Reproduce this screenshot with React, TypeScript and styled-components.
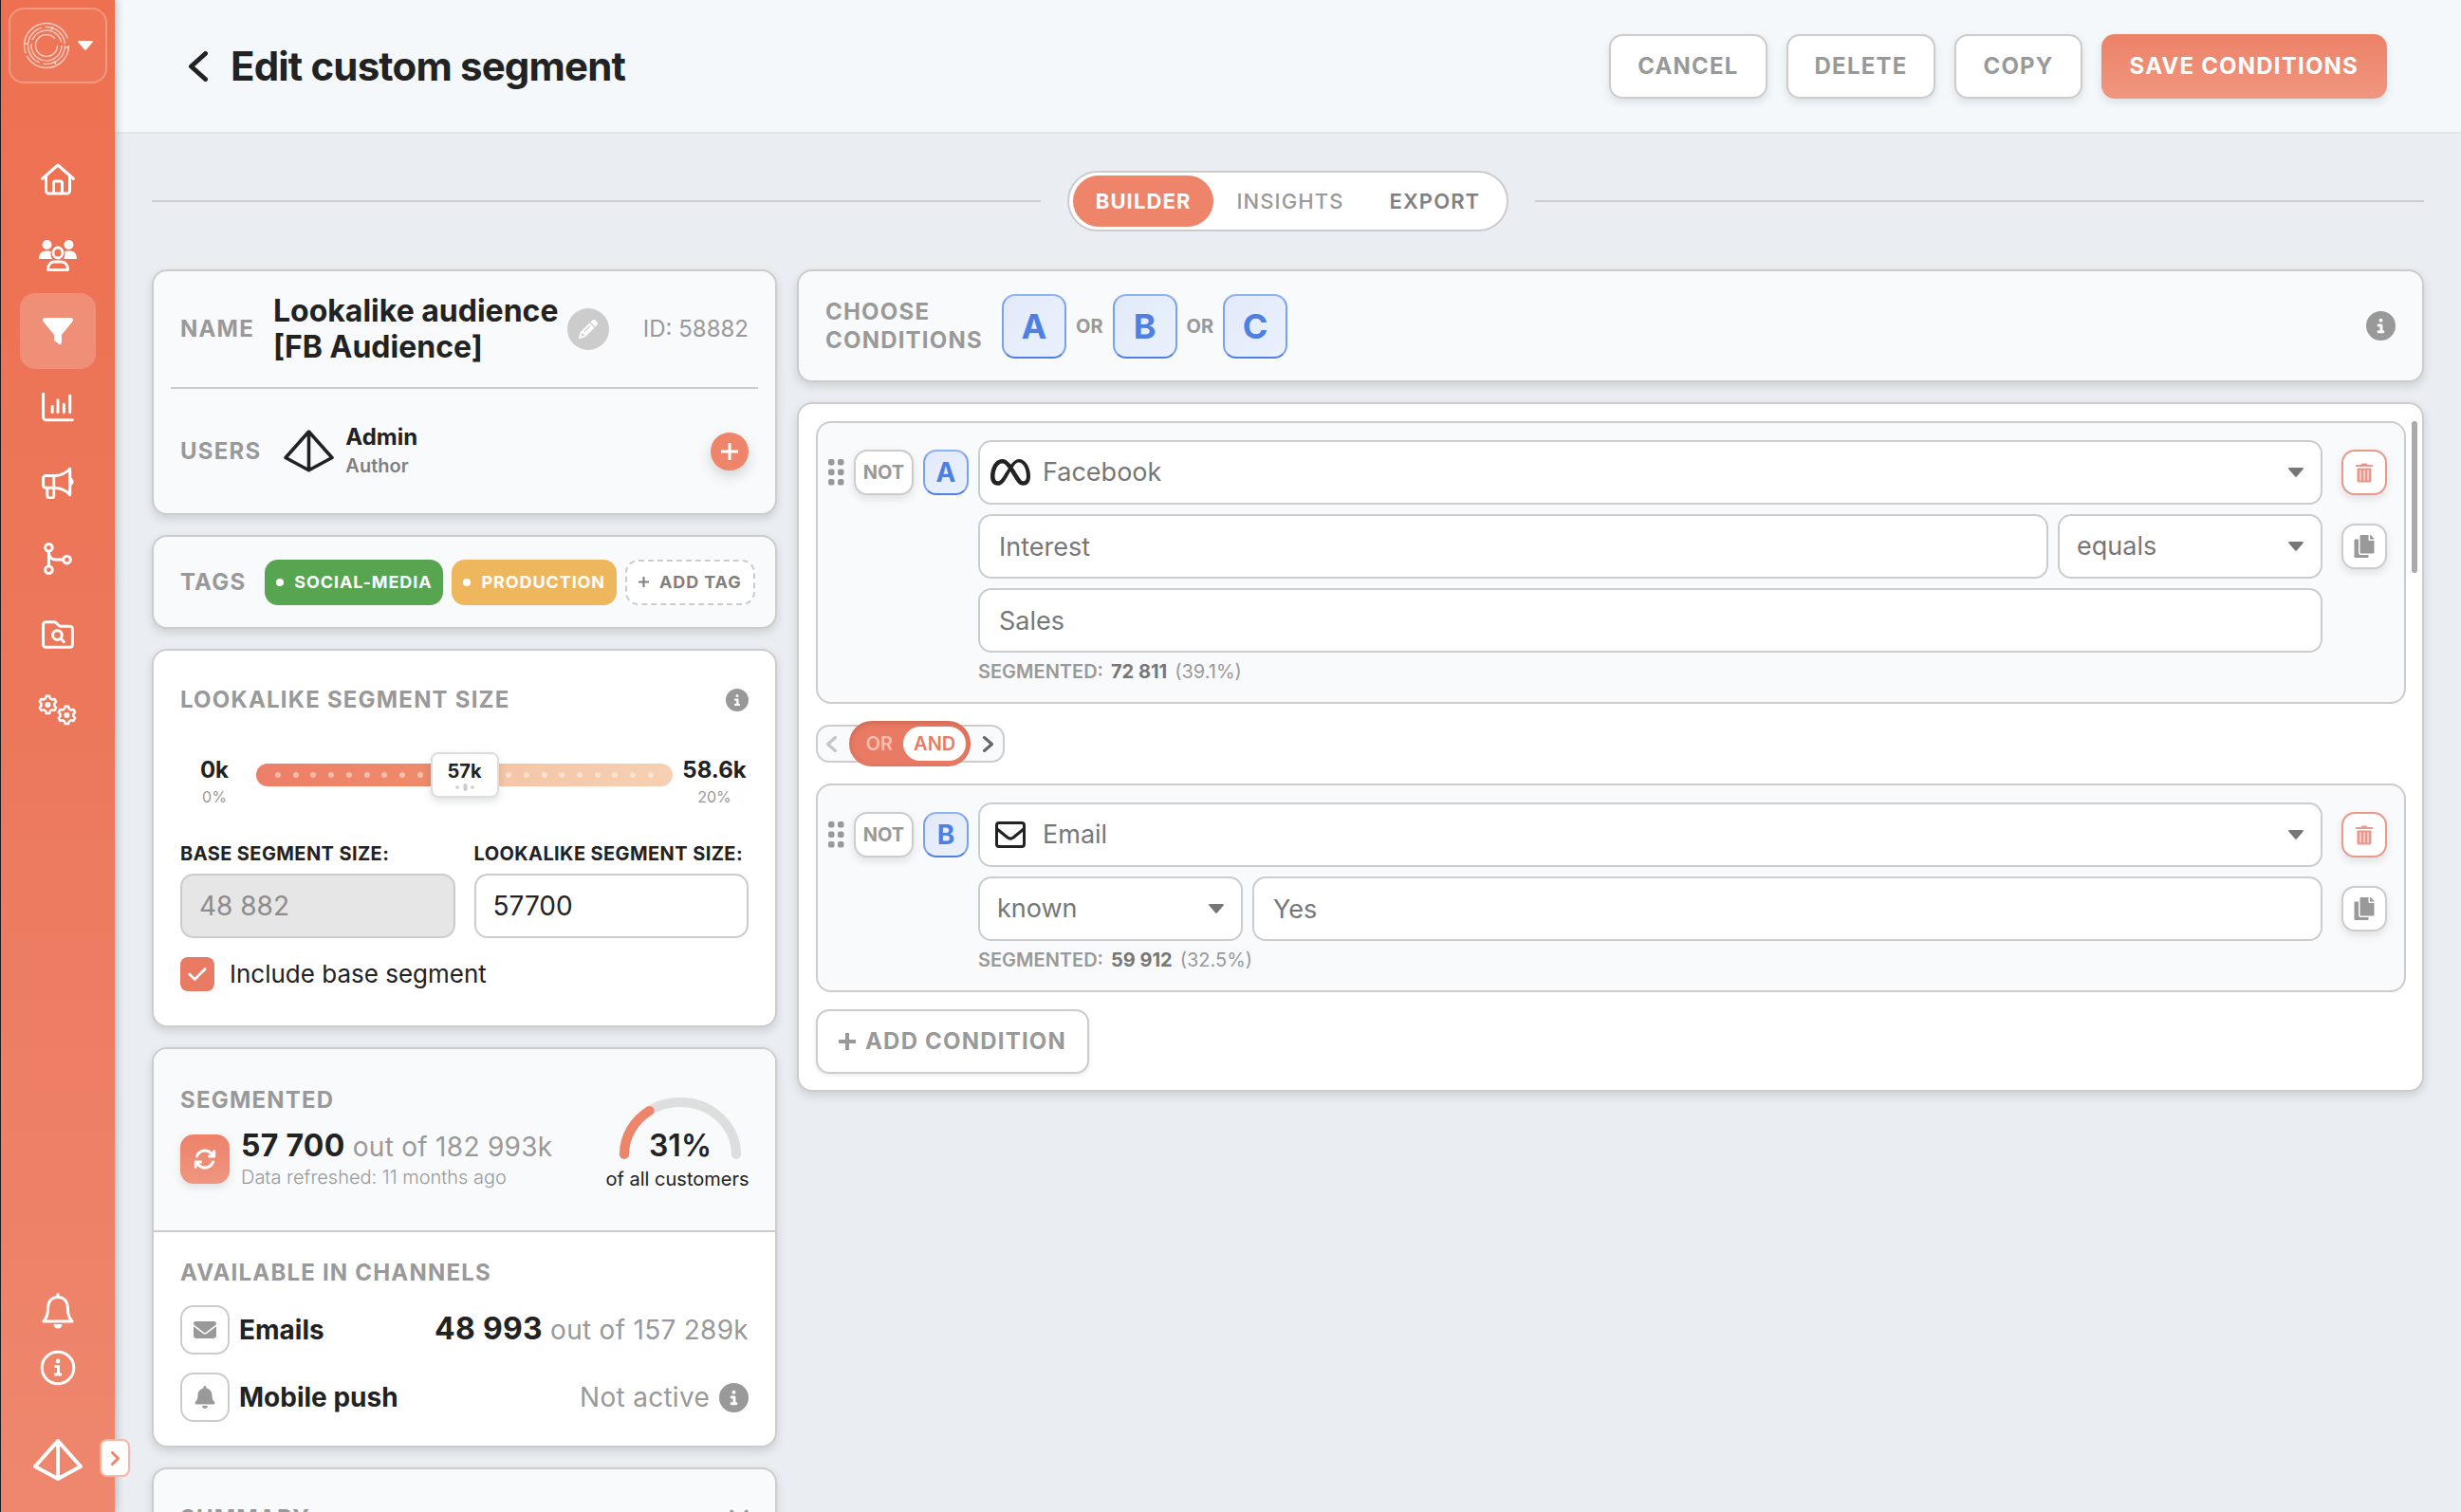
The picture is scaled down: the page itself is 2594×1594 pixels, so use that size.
import React, { useState } from "react";
import styled, { createGlobalStyle, css } from "styled-components";
import {
  FaArrowsRotate,
  FaBell,
  FaCheck,
  FaCircleInfo,
  FaEnvelope,
  FaFilter,
  FaMeta,
  FaPencil,
} from "react-icons/fa6";
import { FaCopy } from "react-icons/fa";

const color = {
  page: "#eaedf2",
  panel: "#f9fafb",
  white: "#ffffff",
  ink: "#222222",
  body: "#777777",
  label: "#999999",
  line: "#cccccc",
  accent: "#ee846a",
  blue: "#4f80e1",
};

const GlobalStyle = createGlobalStyle`
  *, *::before, *::after { box-sizing: border-box; }
  body {
    margin: 0;
    background: ${color.page};
    color: ${color.ink};
    font-family: Inter, "Liberation Sans", sans-serif;
    font-size: 24px;
    line-height: 30px;
  }
  button, input, select { font: inherit; color: inherit; margin: 0; }
  button { cursor: pointer; padding: 0; }
  h1, h2, p { margin: 0; }
  svg { display: block; flex: none; }
`;

/* ---------- shell ---------- */

const Shell = styled.div`
  display: flex;
  height: 100vh;
  overflow: hidden;
`;

const Sidebar = styled.nav`
  position: relative;
  z-index: 2;
  flex: none;
  display: flex;
  flex-direction: column;
  align-items: center;
  width: 121px;
  padding: 8px 0 33px;
  border-left: 1px solid #1d1d1f;
  color: ${color.white};
  background: linear-gradient(180deg, #ee7050 0%, #ec775b 45%, #ee876e 100%);
  box-shadow: 2px 0 8px rgba(60, 70, 80, 0.3);
`;

const Workspace = styled.button`
  display: flex;
  align-items: center;
  justify-content: center;
  gap: 8px;
  width: 104px;
  height: 80px;
  border: 2px solid rgba(255, 255, 255, 0.25);
  border-radius: 16px;
  background: rgba(255, 255, 255, 0.04);
  color: inherit;
`;

const NavList = styled.div<{ $top?: number }>`
  display: flex;
  flex-direction: column;
  align-items: center;
  margin-top: ${(p) => (p.$top ? `${p.$top}px` : "auto")};
`;

const NavLink = styled.a<{ $active?: boolean; $short?: boolean }>`
  display: grid;
  place-items: center;
  width: 80px;
  height: ${(p) => (p.$short ? 60 : 80)}px;
  border-radius: 16px;
  color: inherit;
  background: ${(p) => (p.$active ? "rgba(255, 255, 255, 0.2)" : "transparent")};
`;

const BrandMark = styled.div`
  margin-top: 45px;
`;

const Expand = styled.button`
  position: absolute;
  right: -16px;
  bottom: 37px;
  display: grid;
  place-items: center;
  width: 32px;
  height: 40px;
  border: 2px solid #f9b5a4;
  border-radius: 8px;
  background: ${color.white};
  color: ${color.accent};
`;

const Main = styled.main`
  flex: 1;
  min-width: 0;
  display: flex;
  flex-direction: column;
`;

const Header = styled.header`
  flex: none;
  display: flex;
  align-items: center;
  justify-content: space-between;
  height: 141px;
  padding: 0 78px;
  border-bottom: 2px solid #e3e6e8;
  background: #f4f8fb;
`;

const Heading = styled.div`
  display: flex;
  align-items: center;
  gap: 24px;
`;

const BackLink = styled.a`
  color: ${color.ink};
`;

const Title = styled.h1`
  font-size: 42px;
  line-height: 52px;
  font-weight: 700;
  letter-spacing: -0.02em;
`;

const Actions = styled.div`
  display: flex;
  gap: 20px;
`;

const raised = css`
  box-shadow: 0 4px 8px rgba(50, 60, 70, 0.13);
`;

const Button = styled.button<{ $primary?: boolean }>`
  height: 68px;
  padding: 0 28px;
  border: 2px solid ${(p) => (p.$primary ? "transparent" : color.line)};
  border-radius: 14px;
  font-size: 24px;
  font-weight: 700;
  letter-spacing: 0.05em;
  color: ${(p) => (p.$primary ? color.white : color.label)};
  background: ${(p) => (p.$primary ? "linear-gradient(180deg, #ec8268, #f09680) border-box" : color.white)};
  ${raised}
`;

const Content = styled.div`
  flex: 1;
  min-height: 0;
  overflow-y: auto;
  scrollbar-width: none;
  padding: 39px;
`;

/* ---------- tabs ---------- */

const TabRow = styled.div`
  display: flex;
  align-items: center;
  gap: 28px;
  margin-bottom: 40px;
  &::before,
  &::after {
    content: "";
    flex: 1;
    height: 2px;
    background: ${color.line};
  }
`;

const Tabs = styled.div`
  display: flex;
  padding: 3px 4px;
  border: 2px solid ${color.line};
  border-radius: 32px;
  background: ${color.white};
`;

const Tab = styled.button<{ $tone: "on" | "soft" | "normal" }>`
  height: 54px;
  padding: 0 24px;
  border: 0;
  border-radius: 27px;
  font-size: 22px;
  letter-spacing: 0.05em;
  font-weight: ${(p) => (p.$tone === "on" ? 700 : p.$tone === "normal" ? 600 : 500)};
  color: ${(p) => (p.$tone === "on" ? color.white : p.$tone === "normal" ? "#808080" : color.label)};
  background: ${(p) => (p.$tone === "on" ? color.accent : "transparent")};
`;

/* ---------- cards ---------- */

const Columns = styled.div`
  display: grid;
  grid-template-columns: 659px minmax(0, 1fr);
  align-items: start;
  gap: 21px;
`;

const Stack = styled.div`
  display: flex;
  flex-direction: column;
  gap: 21px;
`;

const Card = styled.section<{ $white?: boolean }>`
  border: 2px solid ${color.line};
  border-radius: 16px;
  background: ${(p) => (p.$white ? color.white : color.panel)};
  box-shadow: 0 4px 10px rgba(50, 60, 70, 0.16);
`;

const Label = styled.h2`
  font-size: 24px;
  line-height: 30px;
  font-weight: 700;
  letter-spacing: 0.05em;
  color: ${color.label};
`;

const InfoRow = styled.div<{ $height: number }>`
  display: flex;
  align-items: center;
  gap: 20px;
  min-height: ${(p) => p.$height}px;
  padding: 0 28px;
`;

const Divider = styled.hr`
  height: 2px;
  margin: 0 18px;
  border: 0;
  background: ${color.line};
`;

const SegmentName = styled.p`
  flex: 0 1 302px;
  font-size: 32px;
  line-height: 38px;
  font-weight: 700;
`;

const Round = styled.button<{ $accent?: boolean }>`
  flex: none;
  display: grid;
  place-items: center;
  width: ${(p) => (p.$accent ? 40 : 44)}px;
  height: ${(p) => (p.$accent ? 40 : 44)}px;
  margin-left: ${(p) => (p.$accent ? "auto" : "-12px")};
  border: 0;
  border-radius: 50%;
  color: ${color.white};
  background: ${(p) => (p.$accent ? color.accent : color.line)};
  box-shadow: ${(p) => (p.$accent ? "0 6px 14px rgba(50, 60, 70, 0.2)" : "none")};
`;

const Identifier = styled.span`
  margin-left: auto;
  font-weight: 400;
  color: ${color.label};
`;

const User = styled.div`
  display: flex;
  align-items: center;
  gap: 12px;
  margin-left: 4px;
`;

const UserName = styled.p`
  font-weight: 700;
`;

const UserRole = styled.p`
  font-size: 20px;
  font-weight: 600;
  color: #808080;
`;

const TagList = styled.div`
  display: flex;
  gap: 9px;
`;

const Tag = styled.button<{ $bg?: string }>`
  display: flex;
  align-items: center;
  gap: 11px;
  height: 48px;
  padding: 0 12px;
  border: ${(p) => (p.$bg ? "0" : `2px dashed ${color.line}`)};
  border-radius: 14px;
  font-size: 18px;
  font-weight: 700;
  letter-spacing: 0.05em;
  white-space: nowrap;
  color: ${(p) => (p.$bg ? color.white : "#808080")};
  background: ${(p) => p.$bg ?? color.white};
`;

const TagDot = styled.span`
  width: 8px;
  height: 8px;
  border-radius: 50%;
  background: currentColor;
`;

/* ---------- lookalike size ---------- */

const Section = styled.div<{ $top: number; $bottom: number }>`
  padding: ${(p) => p.$top}px 28px ${(p) => p.$bottom}px;
`;

const Spread = styled.div`
  display: flex;
  align-items: center;
  justify-content: space-between;
  color: ${color.label};
`;

const RangeRow = styled.div`
  display: grid;
  grid-template-columns: 72px 1fr 72px;
  gap: 8px;
  margin-top: 40px;
`;

const RangeEnd = styled.div`
  padding-top: 4px;
  text-align: center;
`;

const RangeValue = styled.p`
  font-weight: 700;
`;

const RangePercent = styled.p`
  font-size: 16px;
  line-height: 26px;
  color: ${color.label};
`;

const Slider = styled.div`
  position: relative;
  display: grid;
  align-items: center;
  height: 48px;
`;

const Track = styled.div`
  grid-area: 1 / 1;
  display: flex;
  align-items: center;
  justify-content: space-between;
  height: 24px;
  padding: 0 20px;
  border-radius: 12px;
`;

const TrackDot = styled.span`
  width: 6px;
  height: 6px;
  border-radius: 50%;
  background: rgba(255, 255, 255, 0.45);
`;

const RangeInput = styled.input`
  grid-area: 1 / 1;
  appearance: none;
  width: 100%;
  height: 48px;
  background: transparent;
  &::-webkit-slider-thumb {
    appearance: none;
    width: 72px;
    height: 48px;
    border: 2px solid #dddddd;
    border-radius: 8px;
    background: ${color.white};
    box-shadow: 0 4px 8px rgba(50, 60, 70, 0.15);
  }
`;

const RangeOutput = styled.output`
  position: absolute;
  top: 7px;
  display: grid;
  justify-items: center;
  width: 72px;
  font-size: 20px;
  line-height: 26px;
  font-weight: 700;
  pointer-events: none;
`;

const Fields = styled.div`
  display: grid;
  grid-template-columns: 1fr 1fr;
  gap: 20px;
  margin-top: 35px;
`;

const Field = styled.label`
  display: grid;
  gap: 9px;
  font-size: 20px;
  line-height: 24px;
  font-weight: 700;
  letter-spacing: 0.02em;
  white-space: nowrap;
`;

const fieldBox = css`
  width: 100%;
  min-width: 0;
  height: 68px;
  border: 2px solid ${color.line};
  border-radius: 14px;
  font-weight: 400;
  letter-spacing: 0;
`;

const NumberInput = styled.input`
  ${fieldBox}
  padding: 0 18px;
  font-size: 28px;
  background: ${color.white};
  &:disabled {
    color: #8c8c8c;
    background: #e6e6e6;
  }
`;

const CheckLine = styled.label`
  display: flex;
  align-items: center;
  gap: 16px;
  margin-top: 20px;
  font-size: 26px;
`;

const CheckBox = styled.span`
  display: grid;
  place-items: center;
  color: ${color.white};
  & > * {
    grid-area: 1 / 1;
  }
  svg {
    pointer-events: none;
    z-index: 1;
  }
`;

const CheckInput = styled.input`
  appearance: none;
  width: 36px;
  height: 36px;
  border-radius: 8px;
  background: #d0d0d0;
  &:checked {
    background: #e97b64;
  }
`;

/* ---------- counts ---------- */

const Overview = styled.div`
  display: grid;
  grid-template-columns: 1fr 150px;
  padding: 39px 28px 42px;
  border-bottom: 2px solid ${color.line};
  border-radius: 14px 14px 0 0;
  background: ${color.panel};
`;

const Totals = styled.div`
  display: flex;
  align-items: center;
  gap: 12px;
  margin-top: 15px;
`;

const Refresh = styled.button`
  display: grid;
  place-items: center;
  width: 52px;
  height: 52px;
  border: 0;
  border-radius: 14px;
  color: ${color.white};
  background: linear-gradient(180deg, #ec8268, #f09680);
  ${raised}
`;

const Count = styled.p`
  font-size: 28px;
  line-height: 38px;
  font-weight: 400;
  letter-spacing: 0.01em;
  color: ${color.label};
  white-space: nowrap;
`;

const Big = styled.strong`
  font-size: 32px;
  line-height: 32px;
  font-weight: 700;
  color: ${color.ink};
`;

const Note = styled.p`
  font-size: 20px;
  line-height: 26px;
  font-weight: 300;
  color: ${color.label};
`;

const GaugeColumn = styled.div`
  display: flex;
  flex-direction: column;
  align-items: center;
  gap: 8px;
  padding-top: 12px;
  font-size: 20px;
  line-height: 24px;
  white-space: nowrap;
`;

const Gauge = styled.div`
  display: grid;
  justify-items: center;
  align-items: end;
  padding-left: 6px;
  & > * {
    grid-area: 1 / 1;
  }
`;

const GaugeValue = styled.strong`
  font-size: 32px;
  line-height: 30px;
  font-weight: 600;
`;

const Channel = styled.div`
  display: flex;
  align-items: center;
  gap: 10px;
  margin-top: 19px;
  color: ${color.label};
`;

const ChannelIcon = styled.span`
  display: grid;
  place-items: center;
  width: 52px;
  height: 52px;
  border: 2px solid ${color.line};
  border-radius: 14px;
`;

const ChannelName = styled.p`
  margin-right: auto;
  font-size: 28px;
  line-height: 38px;
  font-weight: 700;
  color: ${color.ink};
`;

/* ---------- conditions ---------- */

const Choose = styled.div`
  display: flex;
  align-items: center;
  gap: 10px;
  min-height: 115px;
  padding: 0 28px;
  font-size: 20px;
  font-weight: 700;
  color: ${color.label};
  & > svg {
    margin-left: auto;
  }
`;

const ChooseLabel = styled(Label)`
  width: 176px;
`;

const Letter = styled.button<{ $large?: boolean }>`
  flex: none;
  width: ${(p) => (p.$large ? 68 : 48)}px;
  height: ${(p) => (p.$large ? 68 : 48)}px;
  border: 2px solid;
  border-color: #8fb2f0 #7aa2ec #4f80e1;
  border-radius: 14px;
  font-size: ${(p) => (p.$large ? 36 : 28)}px;
  font-weight: 700;
  color: ${color.blue};
  background: linear-gradient(135deg, #e2eafa, #eaf0fc);
`;

const Builder = styled(Card)`
  position: relative;
  display: flex;
  flex-direction: column;
  align-items: flex-start;
  gap: 18px;
  padding: 18px 17px 17px 18px;
`;

const ScrollThumb = styled.span`
  position: absolute;
  top: 18px;
  right: 5px;
  width: 6px;
  height: 160px;
  border-radius: 3px;
  background: #aaaaaa;
`;

const Condition = styled.div`
  display: flex;
  align-items: flex-start;
  gap: 10px;
  width: 100%;
  padding: 18px 18px 22px 11px;
  border: 2px solid ${color.line};
  border-radius: 16px;
  background: ${color.panel};
`;

const Lead = styled.div`
  display: flex;
  align-items: center;
  gap: 10px;
  height: 68px;
  color: ${color.label};
`;

const NotButton = styled.button`
  width: 63px;
  height: 48px;
  border: 2px solid ${color.line};
  border-radius: 14px;
  font-size: 20px;
  font-weight: 700;
  background: ${color.white};
  ${raised}
`;

const Rules = styled.div`
  flex: 1;
  min-width: 0;
  display: grid;
  gap: 10px;
`;

const Rule = styled.div<{ $columns?: string }>`
  display: grid;
  grid-template-columns: ${(p) => p.$columns ?? "1fr"};
  gap: 10px;
`;

const TextInput = styled.input`
  ${fieldBox}
  padding: 0 20px;
  font-size: 27px;
  color: ${color.body};
  background: ${color.white};
`;

const SelectWrap = styled.div`
  position: relative;
  display: grid;
  align-items: center;
  color: ${color.body};
`;

const SelectBox = styled.select<{ $icon?: boolean }>`
  ${fieldBox}
  appearance: none;
  padding: 0 50px 0 ${(p) => (p.$icon ? 66 : 18)}px;
  font-size: 27px;
  background: ${color.white};
`;

const SelectIcon = styled.span`
  position: absolute;
  left: 12px;
  display: grid;
  place-items: center;
  width: 44px;
  color: ${color.ink};
  pointer-events: none;
`;

const SelectCaret = styled.span`
  position: absolute;
  right: 20px;
  pointer-events: none;
`;

const Summary = styled.p`
  display: flex;
  gap: 8px;
  font-size: 20px;
  line-height: 20px;
  color: ${color.label};
`;

const SummaryName = styled.span`
  font-weight: 600;
`;

const SummaryValue = styled.strong`
  font-weight: 700;
  color: ${color.body};
`;

const Tools = styled.div`
  display: grid;
  gap: 30px;
  padding: 10px 0 0 10px;
`;

const Tool = styled.button<{ $danger?: boolean }>`
  display: grid;
  place-items: center;
  width: 48px;
  height: 48px;
  border: 2px solid ${(p) => (p.$danger ? "#e8988c" : color.line)};
  border-radius: 14px;
  color: ${(p) => (p.$danger ? "#e8988c" : color.label)};
  background: ${color.white};
  ${raised}
`;

const Joiner = styled.div`
  display: flex;
  align-items: center;
  justify-content: space-between;
  width: 199px;
  height: 40px;
  margin: 4px 0;
  padding: 0 10px 0 9px;
  border: 2px solid ${color.line};
  border-radius: 14px;
  background: ${color.panel};
`;

const Move = styled.button<{ $off?: boolean }>`
  border: 0;
  background: none;
  color: ${(p) => (p.$off ? "#c4c4c4" : "#666666")};
`;

const Switch = styled.div`
  display: flex;
  align-items: center;
  height: 48px;
  padding: 0 5px 0 7px;
  border-radius: 24px;
  background: #e97b64;
  box-shadow: inset 0 2px 6px rgba(120, 40, 20, 0.25);
`;

const SwitchOption = styled.button<{ $on?: boolean }>`
  height: 36px;
  padding: 0 11px;
  border: 0;
  border-radius: 18px;
  font-size: 20px;
  font-weight: 600;
  color: ${(p) => (p.$on ? "#e97b64" : "#f8beae")};
  background: ${(p) => (p.$on ? color.white : "transparent")};
`;

const AddCondition = styled(Button)`
  display: flex;
  align-items: center;
  gap: 10px;
  padding: 0 22px;
  box-shadow: 0 2px 4px rgba(50, 60, 70, 0.1);
`;

/* ---------- drawings ---------- */

const Line = ({
  size,
  box = 32,
  width = 2.6,
  children,
}: {
  size: number;
  box?: number;
  width?: number;
  children: React.ReactNode;
}) => (
  <svg
    width={size}
    height={size}
    viewBox={`0 0 ${box} ${box}`}
    fill="none"
    stroke="currentColor"
    strokeWidth={width}
    strokeLinecap="round"
    strokeLinejoin="round"
    aria-hidden="true"
  >
    {children}
  </svg>
);

const HomeIcon = () => (
  <Line size={38} box={38} width={3}>
    <path d="M2.500 18.500 19 4l16.500 14.500M6.500 15.500V31a3 3 0 0 0 3 3h19a3 3 0 0 0 3-3V15.500M14.500 34V23a2 2 0 0 1 2-2h5a2 2 0 0 1 2 2v11" />
  </Line>
);

const PeopleIcon = () => (
  <svg width="40" height="34" viewBox="0 0 40 34" aria-hidden="true">
    <g fill="currentColor">
      <circle cx="8.500" cy="6" r="5" />
      <circle cx="31.500" cy="6" r="5" />
      <path d="M0 21c0-5 2.500-8.500 7-8.500h3.500c1 0 1.800.2 2.500.6-1 3-.5 5.500 1 7.900H0zM40 21c0-5-2.500-8.500-7-8.500h-3.500c-1 0-1.800.2-2.500.6 1 3 .5 5.500-1 7.900H40z" />
    </g>
    <g fill="none" stroke="currentColor" strokeWidth="2.800" strokeLinejoin="round">
      <ellipse cx="20" cy="14.500" rx="5" ry="5.500" />
      <path d="M9.500 32.500c0-5 2.500-8.500 7-8.500h7c4.500 0 7 3.500 7 8.500z" />
    </g>
  </svg>
);

const ChartIcon = () => (
  <Line size={34} width={2.8}>
    <path d="M1.500 3v23a3 3 0 0 0 3 3H30.500M10.500 15.500v6M16 9.500v12M22 13.500v8M28 5v16.500" />
  </Line>
);

const MegaphoneIcon = () => (
  <Line size={34} width={2.8}>
    <path d="M12 9H4a2.500 2.500 0 0 0-2.500 2.500v7A2.500 2.500 0 0 0 4 21h8zM12 9c6 0 12-2.500 16-7v26c-4-4.500-10-7-16-7M5.500 21v8a2 2 0 0 0 2 2h2.500a2 2 0 0 0 2-2v-8M28.500 12c2.300 1.500 2.300 4.500 0 6" />
  </Line>
);

const BranchIcon = () => (
  <Line size={34} width={2.8}>
    <circle cx="7" cy="5" r="3.600" />
    <circle cx="7" cy="27" r="3.600" />
    <circle cx="25" cy="17" r="3.600" />
    <path d="M7 8.600v14.800M7 9c0 5 2.500 8 7 8h7.400" />
  </Line>
);

const FolderIcon = () => (
  <Line size={34} width={2.8}>
    <path d="M1.500 6A2.500 2.500 0 0 1 4 3.500h8.500a2 2 0 0 1 1.500.6l3 3a2 2 0 0 0 1.500.6H28a2.500 2.500 0 0 1 2.500 2.500v16A2.500 2.500 0 0 1 28 28.500H4A2.500 2.500 0 0 1 1.500 26z" />
    <circle cx="15.500" cy="16.500" r="4.600" />
    <path d="m19 20 3 3.200" />
  </Line>
);

const gearPath =
  "M9.200 1.400h3.600l.8 2.600 2.100 1.200 2.700-.6 1.800 3.100-1.900 2v2.500l1.900 2-1.800 3.100-2.700-.6-2.100 1.200-.8 2.700H9.200l-.8-2.700-2.100-1.200-2.700.6-1.800-3.100 1.900-2V9.700l-1.900-2 1.800-3.100 2.700.6 2.100-1.200z";

const GearsIcon = () => (
  <svg
    width="42"
    height="34"
    viewBox="0 0 42 34"
    fill="none"
    stroke="currentColor"
    strokeWidth="2.600"
    strokeLinejoin="round"
    aria-hidden="true"
  >
    <g transform="translate(0 .500) scale(.95)">
      <path d={gearPath} />
      <circle cx="11" cy="11" r="1.800" />
    </g>
    <g transform="translate(20 11.500) scale(.95)">
      <path d={gearPath} />
      <circle cx="11" cy="11" r="1.800" />
    </g>
  </svg>
);

const BellIcon = () => (
  <svg width="34" height="38" viewBox="0 0 34 38" fill="none" stroke="currentColor" strokeWidth="3" strokeLinejoin="round" aria-hidden="true">
    <path d="M17 1.500v3M2 30c3-3.500 4.500-6 4.500-12.500C6.500 9 10.500 4.500 17 4.500S27.500 9 27.500 17.500C27.500 24 29 26.500 32 30z" strokeLinecap="round" />
    <path d="M12.500 33h9a4.500 4.500 0 0 1-9 0z" fill="currentColor" stroke="none" />
  </svg>
);

const InfoOutline = () => (
  <svg width="38" height="38" viewBox="0 0 38 38" fill="none" aria-hidden="true">
    <circle cx="19" cy="19" r="16.800" stroke="currentColor" strokeWidth="3" />
    <circle cx="19" cy="12" r="2.400" fill="currentColor" />
    <path d="M15.500 17.500h4V26m-4.500 0h8" stroke="currentColor" strokeWidth="3" />
  </svg>
);

const Pyramid = ({ width, stroke }: { width: number; stroke: number }) => (
  <svg
    width={width}
    height={(width * 44) / 52}
    viewBox="0 0 52 44"
    fill="none"
    stroke="currentColor"
    strokeWidth={stroke}
    strokeLinejoin="round"
    aria-hidden="true"
  >
    <path d="M26 2 50 29 26 42 2 29zM26 2v40" />
  </svg>
);

const MazeLogo = () => (
  <svg width="50" height="50" viewBox="0 0 50 50" fill="none" stroke="#ffffff" strokeOpacity=".6" strokeWidth="1.500" aria-hidden="true">
    <circle cx="25" cy="25" r="23.500" strokeDasharray="62 3 74 9" />
    <circle cx="25" cy="25" r="19.500" strokeDasharray="34 4 48 4 30 3" />
    <circle cx="25" cy="25" r="16" strokeDasharray="52 4 40 5" />
    <circle cx="25" cy="25" r="11.500" strokeDasharray="64 8" />
    <path d="M1.500 23h4M44.500 27h4M33 41l2 4M30 9l2-4" />
  </svg>
);

const Chevron = ({ dir, w, h, stroke }: { dir: "left" | "right"; w: number; h: number; stroke: number }) => (
  <svg width={w} height={h} viewBox={`0 0 ${w} ${h}`} fill="none" stroke="currentColor" strokeWidth={stroke} strokeLinecap="round" strokeLinejoin="round" aria-hidden="true">
    <path
      d={
        dir === "left"
          ? `M${w - stroke / 2} ${stroke / 2} L${stroke / 2} ${h / 2} L${w - stroke / 2} ${h - stroke / 2}`
          : `M${stroke / 2} ${stroke / 2} L${w - stroke / 2} ${h / 2} L${stroke / 2} ${h - stroke / 2}`
      }
    />
  </svg>
);

const Plus = ({ size, stroke }: { size: number; stroke: number }) => (
  <svg width={size} height={size} viewBox={`0 0 ${size} ${size}`} stroke="currentColor" strokeWidth={stroke} aria-hidden="true">
    <path d={`M${size / 2} 0V${size}M0 ${size / 2}H${size}`} />
  </svg>
);

const Caret = () => (
  <svg width="16" height="10" viewBox="0 0 16 10" fill="currentColor" aria-hidden="true">
    <path d="M1.300 0h13.400c1 0 1.600 1 .8 1.800L9 9.200c-.6.700-1.400.7-2 0L.5 1.800C-.3 1 .3 0 1.300 0z" />
  </svg>
);

const Grip = () => (
  <svg width="17" height="28" viewBox="0 0 17 28" fill="currentColor" aria-hidden="true">
    {[0, 10.5, 21].map((y) => (
      <g key={y}>
        <rect x="0" y={y} width="6.500" height="6.500" rx="2" />
        <rect x="10" y={y} width="6.500" height="6.500" rx="2" />
      </g>
    ))}
  </svg>
);

const TrashIcon = () => (
  <svg width="18" height="21" viewBox="0 0 18 21" fill="currentColor" aria-hidden="true">
    <path d="M0 2h5.500L6.500.5h5l1 1.500H18v2H0z" />
    <path fillRule="evenodd" d="M1.500 5.500h15V19a1.500 1.500 0 0 1-1.500 1.500H3A1.500 1.500 0 0 1 1.500 19zm3 2v11h1v-11zm4 0v11h1v-11zm4 0v11h1v-11z" />
  </svg>
);

const EnvelopeOutline = () => (
  <svg width="32" height="28" viewBox="0 0 32 28" fill="none" stroke="currentColor" strokeWidth="3" strokeLinejoin="round" aria-hidden="true">
    <rect x="1.500" y="1.500" width="29" height="25" rx="2.500" />
    <path d="m2 8 11 9c2 1.500 4 1.500 6 0L30 8" />
  </svg>
);

const HandleGrip = () => (
  <svg width="20" height="8" viewBox="0 0 20 8" fill="#cccccc" aria-hidden="true">
    <circle cx="2" cy="4" r="1.800" />
    <rect x="8.500" y="0" width="4" height="8" rx="2" />
    <circle cx="18" cy="4" r="1.800" />
  </svg>
);

const CollapseIcon = () => (
  <Line size={24} box={24} width={3}>
    <path d="m6 4 8 8 8-8" />
  </Line>
);

const GaugeArc = ({ share }: { share: number }) => (
  <svg width="128" height="66" viewBox="0 0 128 66" fill="none" strokeWidth="10" strokeLinecap="round" aria-hidden="true">
    <path d="M5 60A59 55 0 0 1 123 60" stroke="#dddfdf" pathLength={100} />
    <path d="M5 60A59 55 0 0 1 123 60" stroke={color.accent} pathLength={100} strokeDasharray={`${share} 200`} />
  </svg>
);

/* ---------- parts ---------- */

const Select = ({ label, value, icon }: { label: string; value: string; icon?: React.ReactNode }) => (
  <SelectWrap>
    <SelectBox aria-label={label} defaultValue={value} $icon={Boolean(icon)}>
      <option>{value}</option>
    </SelectBox>
    {icon && <SelectIcon>{icon}</SelectIcon>}
    <SelectCaret>
      <Caret />
    </SelectCaret>
  </SelectWrap>
);

const ConditionRow = ({
  letter,
  total,
  share,
  children,
}: {
  letter: string;
  total: string;
  share: string;
  children: React.ReactNode;
}) => (
  <Condition>
    <Lead>
      <Grip />
      <NotButton>NOT</NotButton>
      <Letter>{letter}</Letter>
    </Lead>
    <Rules>
      {children}
      <Summary>
        <SummaryName>SEGMENTED:</SummaryName>
        <SummaryValue>{total}</SummaryValue>
        <span>({share})</span>
      </Summary>
    </Rules>
    <Tools>
      <Tool $danger aria-label={`Delete condition ${letter}`}>
        <TrashIcon />
      </Tool>
      <Tool aria-label={`Duplicate condition ${letter}`}>
        <FaCopy size={24} />
      </Tool>
    </Tools>
  </Condition>
);

const navItems = [
  { name: "Home", icon: <HomeIcon /> },
  { name: "Customers", icon: <PeopleIcon /> },
  { name: "Segments", icon: <FaFilter size={32} />, active: true },
  { name: "Analytics", icon: <ChartIcon /> },
  { name: "Campaigns", icon: <MegaphoneIcon /> },
  { name: "Scenarios", icon: <BranchIcon /> },
  { name: "Catalogs", icon: <FolderIcon /> },
  { name: "Settings", icon: <GearsIcon /> },
];

const LookalikeSize = () => {
  const [position, setPosition] = useState(50);
  const [included, setIncluded] = useState(true);
  const fill = {
    background: `linear-gradient(90deg, #ed7f68, #ef8d6a ${position}%, #f4c3a4 ${position}%, #f6d0b2)`,
  };
  const thumb = { left: `calc((100% - 72px) * ${position / 100})` };
  return (
    <Card $white>
      <Section $top={37} $bottom={36}>
        <Spread>
          <Label>LOOKALIKE SEGMENT SIZE</Label>
          <FaCircleInfo size={24} />
        </Spread>
        <RangeRow>
          <RangeEnd>
            <RangeValue>0k</RangeValue>
            <RangePercent>0%</RangePercent>
          </RangeEnd>
          <Slider>
            <Track style={fill}>
              {Array.from({ length: 22 }, (_, i) => (
                <TrackDot key={i} />
              ))}
            </Track>
            <RangeInput
              type="range"
              aria-label="Lookalike segment size"
              value={position}
              onChange={(e) => setPosition(Number(e.target.value))}
            />
            <RangeOutput style={thumb}>
              57k
              <HandleGrip />
            </RangeOutput>
          </Slider>
          <RangeEnd>
            <RangeValue>58.6k</RangeValue>
            <RangePercent>20%</RangePercent>
          </RangeEnd>
        </RangeRow>
        <Fields>
          <Field>
            BASE SEGMENT SIZE:
            <NumberInput disabled defaultValue="48 882" />
          </Field>
          <Field>
            LOOKALIKE SEGMENT SIZE:
            <NumberInput defaultValue="57700" />
          </Field>
        </Fields>
        <CheckLine>
          <CheckBox>
            <CheckInput type="checkbox" checked={included} onChange={(e) => setIncluded(e.target.checked)} />
            <FaCheck size={22} />
          </CheckBox>
          Include base segment
        </CheckLine>
      </Section>
    </Card>
  );
};

export default function App() {
  return (
    <>
      <GlobalStyle />
      <Shell>
        <Sidebar>
          <Workspace aria-label="Switch workspace">
            <MazeLogo />
            <Caret />
          </Workspace>
          <NavList $top={61}>
            {navItems.map((item) => (
              <NavLink key={item.name} href="#" aria-label={item.name} $active={item.active}>
                {item.icon}
              </NavLink>
            ))}
          </NavList>
          <NavList>
            <NavLink href="#" aria-label="Notifications" $short>
              <BellIcon />
            </NavLink>
            <NavLink href="#" aria-label="Help" $short>
              <InfoOutline />
            </NavLink>
          </NavList>
          <BrandMark>
            <Pyramid width={52} stroke={4} />
          </BrandMark>
          <Expand aria-label="Expand menu">
            <Chevron dir="right" w={9} h={15} stroke={3} />
          </Expand>
        </Sidebar>

        <Main>
          <Header>
            <Heading>
              <BackLink href="#" aria-label="Back">
                <Chevron dir="left" w={20} h={32} stroke={5} />
              </BackLink>
              <Title>Edit custom segment</Title>
            </Heading>
            <Actions>
              <Button>CANCEL</Button>
              <Button>DELETE</Button>
              <Button>COPY</Button>
              <Button $primary>SAVE CONDITIONS</Button>
            </Actions>
          </Header>

          <Content>
            <TabRow>
              <Tabs>
                <Tab $tone="on">BUILDER</Tab>
                <Tab $tone="soft">INSIGHTS</Tab>
                <Tab $tone="normal">EXPORT</Tab>
              </Tabs>
            </TabRow>

            <Columns>
              <Stack>
                <Card>
                  <InfoRow $height={122}>
                    <Label>NAME</Label>
                    <SegmentName>Lookalike audience [FB Audience]</SegmentName>
                    <Round aria-label="Edit name">
                      <FaPencil size={20} />
                    </Round>
                    <Identifier>ID: 58882</Identifier>
                  </InfoRow>
                  <Divider />
                  <InfoRow $height={131}>
                    <Label>USERS</Label>
                    <User>
                      <Pyramid width={53} stroke={3.5} />
                      <div>
                        <UserName>Admin</UserName>
                        <UserRole>Author</UserRole>
                      </div>
                    </User>
                    <Round $accent aria-label="Add user">
                      <Plus size={18} stroke={3} />
                    </Round>
                  </InfoRow>
                </Card>

                <Card>
                  <InfoRow $height={95}>
                    <Label>TAGS</Label>
                    <TagList>
                      <Tag $bg="#58a551">
                        <TagDot />
                        SOCIAL-MEDIA
                      </Tag>
                      <Tag $bg="#efb75d">
                        <TagDot />
                        PRODUCTION
                      </Tag>
                      <Tag>
                        <Plus size={11} stroke={2} />
                        ADD TAG
                      </Tag>
                    </TagList>
                  </InfoRow>
                </Card>

                <LookalikeSize />

                <Card $white>
                  <Overview>
                    <div>
                      <Label>SEGMENTED</Label>
                      <Totals>
                        <Refresh aria-label="Refresh data">
                          <FaArrowsRotate size={24} />
                        </Refresh>
                        <div>
                          <Count>
                            <Big>57 700</Big> out of 182 993k
                          </Count>
                          <Note>Data refreshed: 11 months ago</Note>
                        </div>
                      </Totals>
                    </div>
                    <GaugeColumn>
                      <Gauge>
                        <GaugeArc share={31} />
                        <GaugeValue>31%</GaugeValue>
                      </Gauge>
                      of all customers
                    </GaugeColumn>
                  </Overview>
                  <Section $top={28} $bottom={25}>
                    <Label>AVAILABLE IN CHANNELS</Label>
                    <Channel>
                      <ChannelIcon>
                        <FaEnvelope size={24} />
                      </ChannelIcon>
                      <ChannelName>Emails</ChannelName>
                      <Count>
                        <Big>48 993</Big> out of 157 289k
                      </Count>
                    </Channel>
                    <Channel>
                      <ChannelIcon>
                        <FaBell size={24} />
                      </ChannelIcon>
                      <ChannelName>Mobile push</ChannelName>
                      <Count>Not active</Count>
                      <FaCircleInfo size={31} />
                    </Channel>
                  </Section>
                </Card>

                <Card>
                  <Section $top={37} $bottom={37}>
                    <Spread>
                      <Label>SUMMARY</Label>
                      <CollapseIcon />
                    </Spread>
                  </Section>
                </Card>
              </Stack>

              <Stack>
                <Card>
                  <Choose>
                    <ChooseLabel>CHOOSE CONDITIONS</ChooseLabel>
                    <Letter $large>A</Letter>
                    OR
                    <Letter $large>B</Letter>
                    OR
                    <Letter $large>C</Letter>
                    <FaCircleInfo size={31} />
                  </Choose>
                </Card>

                <Builder $white>
                  <ConditionRow letter="A" total="72 811" share="39.1%">
                    <Select label="Source" value="Facebook" icon={<FaMeta size={42} />} />
                    <Rule $columns="minmax(0, 1fr) 279px">
                      <TextInput aria-label="Attribute" defaultValue="Interest" />
                      <Select label="Operator" value="equals" />
                    </Rule>
                    <TextInput aria-label="Value" defaultValue="Sales" />
                  </ConditionRow>

                  <Joiner>
                    <Move $off aria-label="Move left">
                      <Chevron dir="left" w={11} h={17} stroke={3} />
                    </Move>
                    <Switch>
                      <SwitchOption>OR</SwitchOption>
                      <SwitchOption $on>AND</SwitchOption>
                    </Switch>
                    <Move aria-label="Move right">
                      <Chevron dir="right" w={11} h={17} stroke={3} />
                    </Move>
                  </Joiner>

                  <ConditionRow letter="B" total="59 912" share="32.5%">
                    <Select label="Source" value="Email" icon={<EnvelopeOutline />} />
                    <Rule $columns="279px minmax(0, 1fr)">
                      <Select label="Operator" value="known" />
                      <TextInput aria-label="Value" defaultValue="Yes" />
                    </Rule>
                  </ConditionRow>

                  <AddCondition>
                    <Plus size={18} stroke={4} />
                    ADD CONDITION
                  </AddCondition>
                  <ScrollThumb />
                </Builder>
              </Stack>
            </Columns>
          </Content>
        </Main>
      </Shell>
    </>
  );
}
